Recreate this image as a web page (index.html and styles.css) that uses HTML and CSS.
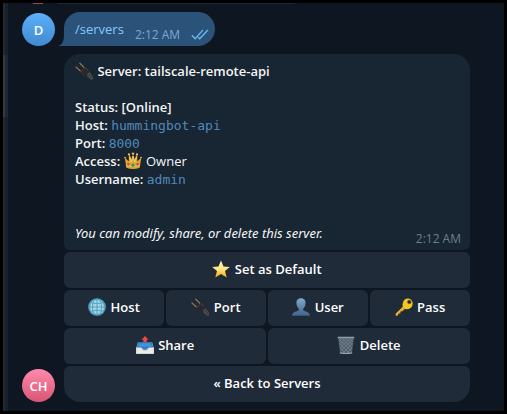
FILE: index.html
```html
<!DOCTYPE html>
<html lang="en">
<head>
<meta charset="utf-8">
<title>Servers</title>
<link rel="stylesheet" href="styles.css">
</head>
<body>
<svg class="defs" aria-hidden="true">
  <defs>
    <linearGradient id="gold" x1="0" y1="0" x2="0" y2="1"><stop offset="0" stop-color="#fff6c0"/><stop offset=".55" stop-color="#ffe27a"/><stop offset="1" stop-color="#f5a80c"/></linearGradient>
    <linearGradient id="person" x1="0" y1="0" x2="0" y2="1"><stop offset="0" stop-color="#81a9c8"/><stop offset="1" stop-color="#3f658c"/></linearGradient>
    <symbol id="plug" viewBox="0 0 18 18">
      <path d="M.6 4.6l5.2 4.8M4.5.8l4.9 5" stroke="#9c8046" stroke-width="1.2" fill="none"/>
      <path d="M4.6 10.3l5.2-5.6 4.6 3.4.4 3.6-3 2.8-4.4-.4z" fill="#29292b"/>
      <path d="M5.4 10.2l4.5-4.6 3.6 2.8" stroke="#48484a" stroke-width=".8" fill="none"/>
      <path d="M12.2 12l2.6-1.8 3 4.5v2.8h-2.2l-3.2-3z" fill="#505054"/>
      <path d="M13.3 14.1l2.3-1.8M15 16l2-1.6" stroke="#202022" stroke-width=".8"/>
    </symbol>
  </defs>
</svg>
<div class="window">
  <div class="sidebar"><div class="thumb"></div></div>
  <main class="chat">
    <div class="previous"><span class="previous-avatar"></span><span class="previous-bubble"></span></div>

    <section class="entry">
      <div class="avatar blue">D</div>
      <div class="bubble own">
        <svg class="tail" viewBox="0 0 7 12"><path d="M7 0v12H0C4 11 6 8 6 0z" fill="#2b5278"/></svg>
        <a class="command" href="#servers">/servers</a>
        <time class="time">2:12 AM</time>
        <svg class="ticks" viewBox="0 0 18 11"><path d="M.8 6.2l3.4 3.5L12 .9M7.2 8.2l1.5 1.5L16.9.9" fill="none" stroke="#6ab7f3" stroke-width="1.4"/></svg>
      </div>
    </section>

    <section class="entry reply">
      <div class="avatar pink">CH</div>
      <div class="stack">
        <article class="bubble message">
          <p class="line"><svg class="emoji"><use href="#plug"/></svg> <b>Server: tailscale-remote-api</b></p>
          <p class="line gap"><b>Status: [Online]</b></p>
          <p class="line"><b>Host:</b> <code>hummingbot-api</code></p>
          <p class="line"><b>Port:</b> <code>8000</code></p>
          <p class="line"><b>Access:</b> <svg class="emoji" viewBox="0 0 18 18">
            <path d="M.8 5.8l4 3.5L5 2.2l3 5L9 1.4l1.2 5.8 3-5 .1 7.1 4-3.5-1.6 10Q9 18.4 2.3 15.8z" fill="#dda52d"/>
            <path d="M2 13.4q7 2 14 0M5.3 4.5l2 5.7L9 4l1.8 6.2 2-5.7" fill="none" stroke="#f7d065" stroke-width=".9"/>
            <circle cx="1" cy="5.6" r=".9" fill="#e9bd48"/><circle cx="5" cy="2.4" r="1.1" fill="#edc455"/><circle cx="9" cy="1.6" r="1.2" fill="#edc455"/><circle cx="13" cy="2.4" r="1.1" fill="#edc455"/><circle cx="17" cy="5.6" r=".9" fill="#e9bd48"/>
            <circle cx="9" cy="13.2" r="1.6" fill="#14a078"/><circle cx="4.4" cy="12.2" r="1.2" fill="#d33c6b"/><circle cx="13.6" cy="12.2" r="1.2" fill="#d33c6b"/>
          </svg> Owner</p>
          <p class="line"><b>Username:</b> <code>admin</code></p>
          <footer class="foot"><em>You can modify, share, or delete this server.</em><time class="time">2:12 AM</time></footer>
        </article>
        <div class="keys">
          <button class="key full" type="button"><svg class="emoji" viewBox="0 0 18 18"><path d="M9 .4l2.5 6 6.3.5-4.8 4.2 1.7 6.4L9 14.1l-5.7 3.4L5 11.1.2 6.9l6.3-.5z" fill="url(#gold)"/></svg> Set as Default</button>
          <button class="key" type="button"><svg class="emoji" viewBox="0 0 18 18"><circle cx="9" cy="9" r="8.8" fill="#4ea3c4"/><path d="M4 3.4Q9 .6 14 3.4 18 9 14 14.6 9 17.4 4 14.6 0 9 4 3.4z" fill="#a9d3e1"/><path d="M9 .3v17.4M.4 9h17.2M2 4.7q7 2 14 0M2 13.3q7-2 14 0M6.5.8q-4.2 8.2 0 16.4M11.5.8q4.2 8.2 0 16.4" fill="none" stroke="#4b9fc2" stroke-width=".9"/></svg> Host</button>
          <button class="key" type="button"><svg class="emoji"><use href="#plug"/></svg> Port</button>
          <button class="key" type="button"><svg class="emoji" viewBox="0 0 18 18"><path d="M9 .2c3.3 0 4.8 2.3 4.5 5.3-.2 2.6-1.2 4.1-2.2 5.1v2c1.6 1 6.2.9 6.6 5.2H.1c.4-4.3 5-4.2 6.6-5.2v-2c-1-1-2-2.500-2.200-5.100C4.200 2.500 5.700.2 9 .2z" fill="url(#person)"/></svg> User</button>
          <button class="key" type="button"><svg class="emoji" viewBox="0 0 18 18"><path d="M8 8.500L.6 15.700v2H3l.3-2 2-.2.300-2 2-.3 2.800-2.700z" fill="#d9a021"/><path d="M9.300 1.700Q13-.8 16.200 1.800 19 5 16.500 9.200 13 12.600 9 10.600 5.800 7 9.300 1.700z" fill="#f2c81d"/><path d="M1 16.400l7.300-7" stroke="#f6d34d" stroke-width=".9"/><circle cx="14.300" cy="3.900" r="2" fill="#1f2b38" stroke="#b98617" stroke-width=".5"/></svg> Pass</button>
          <button class="key half" type="button"><svg class="emoji" viewBox="0 0 18 18"><path d="M2 6h14l1.800 6v5.700H.2V12z" fill="#b8c3cc"/><path d="M2.200 6h13.600l1.500 6H.7z" fill="#2877bd"/><path d="M3 7.300h12l.8 3.500H2.200z" fill="#4593d7"/><path d="M.2 11.500h4.900q1 3.200 3.900 3.200t3.900-3.200h4.900v6.200H.2z" fill="#ecebe7"/><path d="M5.700 11.500h6.600q-.7 2.400-3.300 2.400t-3.300-2.400z" fill="#3685ca"/><path d="M9 .1l3.500 3.700h-1.800v2.400H7.300V3.800H5.500z" fill="#ee4c43"/></svg> Share</button>
          <button class="key half" type="button"><svg class="emoji" viewBox="0 0 18 18"><path d="M1 1h16l-2 16q-6 1.600-12 0z" fill="#4d5c68"/><path d="M2 3l12.500 12M5.500 3l9.500 9M9.500 3l6 6M13 3l3 3M2.500 7l9.500 10M3 11.500L8 17M16 3L3.500 15M12.500 3L3 12M8.500 3L2.500 9M5 3L2 6M15.500 7L6 17M15 12l-5 5" stroke="#8696a3" stroke-width=".6"/><path d="M.7.700h16.600v1.700H.7z" fill="#8d9aa4"/><path d="M2.800 16.200q6.200 1.400 12.400 0v1.200q-6.200 1-12.400 0z" fill="#95a4b1"/></svg> Delete</button>
          <button class="key full last" type="button">« Back to Servers</button>
        </div>
      </div>
    </section>
  </main>
</div>
</body>
</html>
```
FILE: styles.css
```css
* { box-sizing: border-box; }

body {
  margin: 0;
  background: #000;
  color: #f5f5f5;
  font: 13px/18px "Open Sans", sans-serif;
}

.defs { position: absolute; width: 0; height: 0; }

.window {
  display: flex;
  min-height: 100vh;
  border: 3px solid #000;
  background: #0e1621;
}

.sidebar {
  width: 5px;
  padding-top: 52px;
  background: #17212b;
  border-left: 2px solid #232b32;
}

.thumb {
  height: 62px;
  margin-left: -2px;
  background: #1c2a36;
  border-left: 2px solid #303b44;
}

.chat {
  flex: 1;
  padding: 0 34px 9px 14px;
}

.previous {
  display: flex;
  gap: 15px;
  height: 1px;
  margin-bottom: 8px;
  padding-left: 11px;
}

.previous-avatar { width: 10px; background: #a5425b; }
.previous-bubble { width: 237px; background: #182533; }

.entry {
  display: flex;
  align-items: flex-end;
  gap: 9px;
}

.reply { margin-top: 8px; }

.avatar {
  flex: none;
  width: 33px;
  height: 33px;
  border-radius: 50%;
  color: #fff;
  font-weight: 600;
  line-height: 35px;
  text-align: center;
}

.blue { background: linear-gradient(#5caffa, #408acf); }
.pink { background: linear-gradient(#ff8aac, #d95574); }

.bubble { position: relative; }

.own {
  display: flex;
  align-items: center;
  height: 34px;
  padding: 0 6px 0 11px;
  border-radius: 16px 17px 17px 0;
  background: #2b5278;
}

.tail {
  position: absolute;
  left: -6px;
  bottom: 0;
  width: 7px;
  height: 12px;
}

.command {
  margin-right: 11px;
  color: #83caff;
  text-decoration: none;
}

.time {
  color: #6d7f8f;
  font-size: 12px;
}

.own .time { padding-top: 12px; color: #7da8d3; }

.ticks {
  width: 18px;
  height: 11px;
  margin: 10px 0 0 11px;
}

.stack { flex: 1; }

.message {
  padding: 8px 9px 2px 11px;
  border-radius: 16px 16px 6px 6px;
  background: #182533;
}

.line { height: 18px; margin: 0; white-space: nowrap; }
.gap { margin-top: 18px; }

b { font-weight: 600; }

code {
  color: #5189bb;
  font: 13px/18px "DejaVu Sans Mono", monospace;
}

.emoji {
  width: 18px;
  height: 18px;
  margin-right: 1px;
  vertical-align: top;
}

.foot {
  display: flex;
  justify-content: space-between;
  padding-top: 36px;
}

em { font-family: "Noto Sans", sans-serif; }

.foot .time { padding-top: 6px; }

.keys {
  display: grid;
  grid-template-columns: repeat(4, 1fr);
  gap: 2px;
  margin-top: 2px;
}

.key {
  height: 36px;
  padding: 0 0 2px;
  border: 0;
  border-radius: 6px;
  background: #1f2b38;
  color: #fff;
  font: 600 13px/18px "Open Sans", sans-serif;
}

.half { grid-column: span 2; }
.full { grid-column: 1 / -1; }
.last { border-radius: 6px 6px 16px 16px; }
```
